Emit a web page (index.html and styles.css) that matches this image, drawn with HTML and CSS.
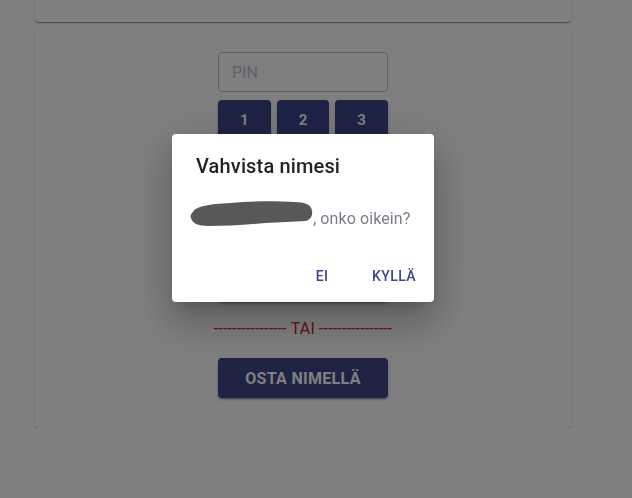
FILE: index.html
```html
<!DOCTYPE html>
<html lang="fi">
<head>
<meta charset="utf-8">
<title>Osta</title>
<link rel="stylesheet" href="styles.css">
</head>
<body>
<main class="page">
  <section class="card card-top"></section>
  <section class="card card-main">
    <div class="pin-form">
      <input class="pin-input" type="text" placeholder="PIN">
      <div class="keypad">
        <button class="key">1</button>
        <button class="key">2</button>
        <button class="key">3</button>
        <button class="key">4</button>
        <button class="key">5</button>
        <button class="key">6</button>
        <button class="key">7</button>
        <button class="key">8</button>
        <button class="key">9</button>
        <button class="key">C</button>
        <button class="key">0</button>
        <button class="key">&larr;</button>
      </div>
      <button class="submit">OSTA</button>
      <div class="divider">---------------- TAI ----------------</div>
      <button class="buy-name">OSTA NIMELLÄ</button>
    </div>
  </section>
</main>

<div class="modal-root">
  <div class="backdrop"></div>
  <div class="dialog" role="dialog">
    <h2 class="dialog-title">Vahvista nimesi</h2>
    <div class="dialog-content">
      <p class="dialog-text"><svg class="redact" width="123" height="27" viewBox="0 0 123 27"><path d="M3 12 C6 6 20 4 40 3 C60 1 85 1 104 2 C115 2 122 5 122 11 C123 16 120 20 115 21 C104 22 90 22 75 23 C55 25 35 26 18 26 C8 26 2 23 1 18 C0 15 1 14 3 12 Z" fill="#58585a"/></svg>, onko oikein?</p>
    </div>
    <div class="dialog-actions">
      <button class="text-btn">EI</button>
      <button class="text-btn">KYLLÄ</button>
    </div>
  </div>
</div>
</body>
</html>
```

FILE: styles.css
```css
* { box-sizing: border-box; }

html, body {
  margin: 0;
  padding: 0;
  background: #ffffff;
  font-family: Roboto, "Liberation Sans", sans-serif;
}

.page {
  width: 536px;
  margin-left: 35px;
  display: flex;
  flex-direction: column;
  gap: 7px;
}

.card {
  background: #ffffff;
  border-radius: 4px;
  box-shadow: 0 2px 1px -1px rgba(0,0,0,0.25), 0 1px 1px 0 rgba(0,0,0,0.16), 0 1px 3px 0 rgba(0,0,0,0.12);
}

.card-top {
  height: 22px;
  border-radius: 0 0 4px 4px;
}

.card-main {
  height: 399px;
  padding-top: 23px;
  display: flex;
  justify-content: center;
}

.pin-form {
  width: 170px;
  display: flex;
  flex-direction: column;
  align-items: stretch;
}

.pin-input {
  height: 40px;
  border: 1px solid #c4c4c4;
  border-radius: 4px;
  padding: 0 13px;
  font-family: Roboto, "Liberation Sans", sans-serif;
  font-size: 16px;
  color: #222;
  outline: none;
}

.pin-input::placeholder {
  color: #bcc3d2;
}

.keypad {
  margin-top: 8px;
  display: grid;
  grid-template-columns: repeat(3, 1fr);
  grid-template-rows: 40px 36px 36px 36px;
  gap: 6px;
}

.key, .submit, .buy-name {
  border: none;
  border-radius: 4px;
  background: #3e468c;
  color: #ffffff;
  font-family: Roboto, "Liberation Sans", sans-serif;
  font-weight: 700;
  font-size: 15px;
  cursor: pointer;
  box-shadow: 0 3px 1px -2px rgba(0,0,0,0.2), 0 2px 2px 0 rgba(0,0,0,0.14), 0 1px 5px 0 rgba(0,0,0,0.12);
}

.submit {
  margin-top: 4px;
  height: 32px;
}

.divider {
  margin-top: 15px;
  line-height: 24px;
  font-size: 16px;
  letter-spacing: 0.15px;
  color: #d81b2a;
  text-align: center;
  white-space: nowrap;
  margin-left: -12px;
  margin-right: -12px;
}

.buy-name {
  margin-top: 17px;
  height: 40px;
  font-size: 16px;
  letter-spacing: 0.3px;
}

.modal-root {
  position: fixed;
  inset: 0;
}

.backdrop {
  position: absolute;
  inset: 0;
  background: rgba(0,0,0,0.5);
}

.dialog {
  position: absolute;
  left: 172px;
  top: 134px;
  width: 262px;
  height: 168px;
  background: #ffffff;
  border-radius: 4px;
  display: flex;
  flex-direction: column;
  box-shadow: 0 11px 15px -7px rgba(0,0,0,0.2), 0 24px 38px 3px rgba(0,0,0,0.14), 0 9px 46px 8px rgba(0,0,0,0.12);
}

.dialog-title {
  margin: 0;
  padding: 16px 24px 0;
  font-size: 20px;
  font-weight: 500;
  line-height: 32px;
  letter-spacing: 0.15px;
  color: rgba(0,0,0,0.87);
}

.dialog-content {
  padding: 25px 24px 0 18px;
  flex: 1;
}

.dialog-text {
  margin: 0;
  font-size: 16px;
  line-height: 24px;
  height: 24px;
  color: #7a7d88;
  white-space: nowrap;
  letter-spacing: 0.1px;
}

.redact {
  vertical-align: -1px;
  margin-top: -12px;
  margin-bottom: -2px;
}

.dialog-actions {
  padding: 8px;
  display: flex;
  justify-content: flex-end;
  gap: 8px;
}

.text-btn {
  min-width: 64px;
  height: 36px;
  padding: 6px 8px;
  border: none;
  background: transparent;
  color: #3e468c;
  font-family: Roboto, "Liberation Sans", sans-serif;
  font-size: 14px;
  font-weight: 500;
  letter-spacing: 0.4px;
  cursor: pointer;
}
```
